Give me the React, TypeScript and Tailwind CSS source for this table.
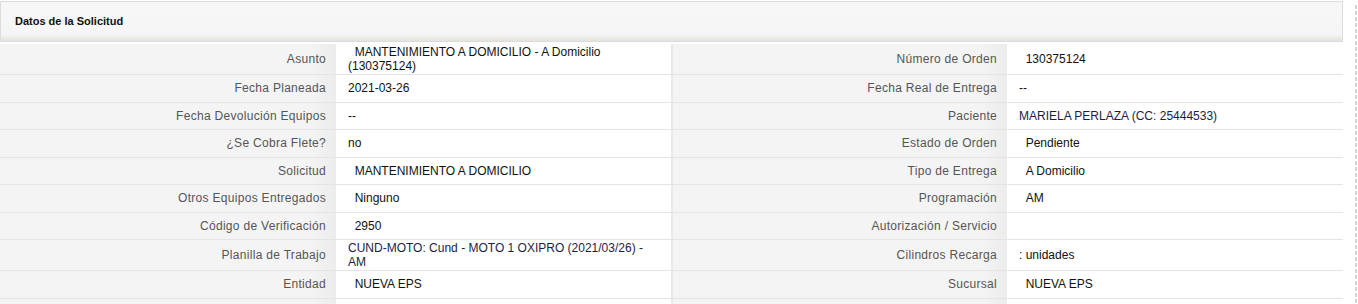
const rows: { l1: string; v1: string; l2: string; v2: string; tall?: boolean; v1c?: string; v2c?: string }[] = [
  { l1: 'Asunto', v1: '\u00a0\u00a0MANTENIMIENTO A DOMICILIO - A Domicilio (130375124)', l2: 'Número de Orden', v2: '\u00a0\u00a0130375124', tall: true },
  { l1: 'Fecha Planeada', v1: '2021-03-26', l2: 'Fecha Real de Entrega', v2: '--' },
  { l1: 'Fecha Devolución Equipos', v1: '--', l2: 'Paciente', v2: 'MARIELA PERLAZA (CC: 25444533)', v2c: 'text-[#1d1d45]' },
  { l1: '¿Se Cobra Flete?', v1: 'no', l2: 'Estado de Orden', v2: '\u00a0\u00a0Pendiente' },
  { l1: 'Solicitud', v1: '\u00a0\u00a0MANTENIMIENTO A DOMICILIO', l2: 'Tipo de Entrega', v2: '\u00a0\u00a0A Domicilio' },
  { l1: 'Otros Equipos Entregados', v1: '\u00a0\u00a0Ninguno', l2: 'Programación', v2: '\u00a0\u00a0AM' },
  { l1: 'Código de Verificación', v1: '\u00a0\u00a02950', l2: 'Autorización / Servicio', v2: '' },
  { l1: 'Planilla de Trabajo', v1: 'CUND-MOTO: Cund - MOTO 1 OXIPRO (2021/03/26) - AM', l2: 'Cilindros Recarga', v2: ': unidades', tall: true, v1c: 'text-[#1d1d45]' },
  { l1: 'Entidad', v1: '\u00a0\u00a0NUEVA EPS', l2: 'Sucursal', v2: '\u00a0\u00a0NUEVA EPS' },
  { l1: '', v1: '', l2: '', v2: '' },
];

function Label({ text, tall, w }: { text: string; tall?: boolean; w: string }) {
  return (
    <div
      className={`${w} shrink-0 flex items-center justify-end pr-[10px] text-[12px] tracking-[0.3px] text-[#555] bg-[linear-gradient(to_right,#f4f4f4_0,#f4f4f4_92%,#ececec_100%)] ${tall ? 'h-[30px]' : 'h-[26.5px]'}`}
    >
      {text}
    </div>
  );
}

function Value({ text, tall, color }: { text: string; tall?: boolean; color?: string }) {
  return (
    <div
      className={`w-[335px] shrink-0 flex items-center pl-[12px] pr-[20px] bg-white text-[12px] leading-[14px] ${color ?? 'text-[#111]'} ${tall ? 'h-[30px]' : 'h-[26.5px]'}`}
    >
      <span>{text}</span>
    </div>
  );
}

export default function App() {
  return (
    <div className="flex w-[1358px] h-[304px] overflow-hidden bg-white font-['Liberation_Sans',Arial,sans-serif]">
      <div className="w-[1343px] shrink-0 pt-[1px]">
        <div className="h-[41px] flex items-center pl-[14px] border border-[#dcdcdc] bg-[linear-gradient(to_bottom,#f7f7f7_0,#f5f5f5_82%,#e3e3dc_100%)]">
          <span className="text-[11px] font-bold text-[#111]">Datos de la Solicitud</span>
        </div>
        <div className="mt-[2px] flex flex-col">
          {rows.map((r, i) => (
            <div key={i} className="flex border-b border-[#e4e4e4]">
              <Label text={r.l1} tall={r.tall} w="w-[336px]" />
              <Value text={r.v1} tall={r.tall} color={r.v1c} />
              <div className="w-[2px] shrink-0 bg-[#e8e8e8]" />
              <Label text={r.l2} tall={r.tall} w="w-[334px]" />
              <Value text={r.v2} tall={r.tall} color={r.v2c} />
            </div>
          ))}
        </div>
      </div>
      <div className="ml-[12px] mt-[5px] w-[2px] h-[299px] bg-[repeating-linear-gradient(to_bottom,#d4d4d4_0,#d4d4d4_4px,transparent_4px,transparent_6px)]" />
    </div>
  );
}
